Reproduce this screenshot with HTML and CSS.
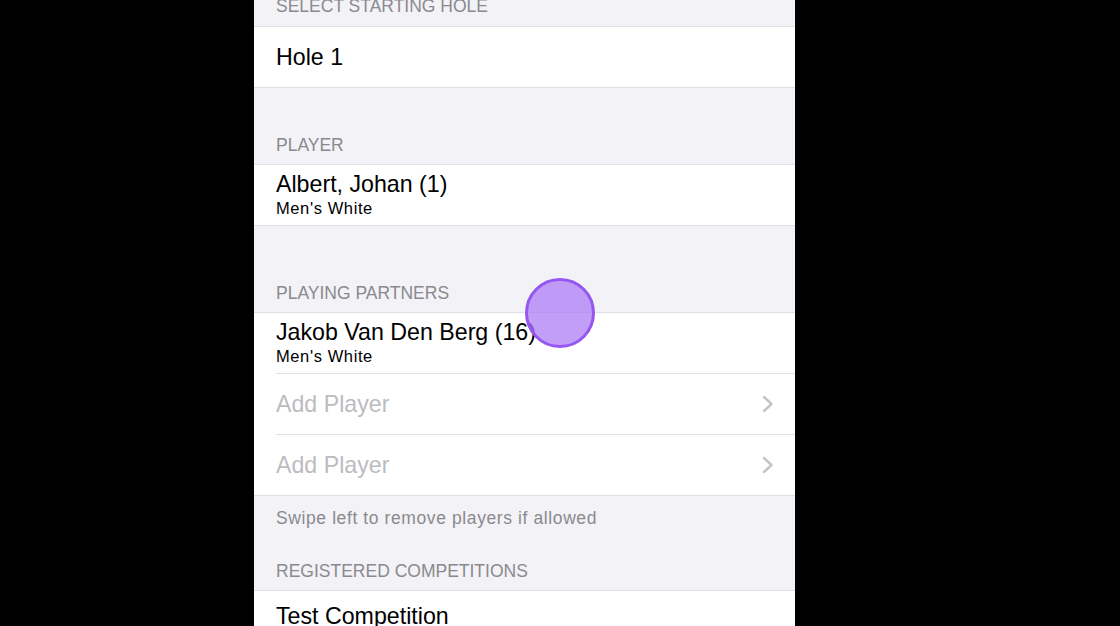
FILE: index.html
```html
<!DOCTYPE html>
<html lang="en">

<head>
    <meta charset="UTF-8">
    <meta name="viewport" content="width=device-width, initial-scale=1.0">
    <title>Round Setup</title>
    <link rel="stylesheet" href="styles.css">
</head>

<body>

    <section class="panel">
        <div class="group-header top-header">SELECT STARTING HOLE</div>
        <div class="group">
            <div class="cell">
                <span class="cell-title">Hole 1</span>
            </div>
        </div>

        <div class="group-header player-header">PLAYER</div>
        <div class="group">
            <div class="cell">
                <span class="cell-title">Albert, Johan (1)</span>
                <span class="cell-sub">Men's White</span>
            </div>
        </div>

        <div class="group-header partners-header">PLAYING PARTNERS</div>
        <div class="group">
            <div class="cell">
                <span class="cell-title">Jakob Van Den Berg (16)</span>
                <span class="cell-sub">Men's White</span>
            </div>
            <div class="cell cell-link">
                <span class="cell-title placeholder">Add Player</span>
                <svg class="chevron" width="12" height="18" viewBox="0 0 12 18">
                    <path d="M2 2 L9.5 9 L2 16" fill="none" stroke="#c4c4c8" stroke-width="2.4" stroke-linecap="round" stroke-linejoin="round" />
                </svg>
            </div>
            <div class="cell cell-link">
                <span class="cell-title placeholder">Add Player</span>
                <svg class="chevron" width="12" height="18" viewBox="0 0 12 18">
                    <path d="M2 2 L9.5 9 L2 16" fill="none" stroke="#c4c4c8" stroke-width="2.4" stroke-linecap="round" stroke-linejoin="round" />
                </svg>
            </div>
        </div>
        <div class="group-footer">Swipe left to remove players if allowed</div>

        <div class="group-header comp-header">REGISTERED COMPETITIONS</div>
        <div class="group">
            <div class="cell cell-top">
                <span class="cell-title">Test Competition</span>
            </div>
        </div>

        <div class="touch"></div>
    </section>

</body>

</html>
```

FILE: styles.css
```css
html,
body {
    margin: 0;
    height: 100%;
    background-color: #000;
    overflow: hidden;
}

body {
    font-family: "Liberation Sans", Arial, sans-serif;
}

.panel {
    position: relative;
    width: 541px;
    height: 100%;
    margin-left: 254px;
    background-color: #f2f2f7;
    overflow: hidden;
}

.group-header {
    display: flex;
    align-items: flex-end;
    box-sizing: border-box;
    padding: 0 22px 9px 22px;
    font-size: 17.5px;
    line-height: 20px;
    color: #8a8a8e;
}

.top-header {
    height: 26px;
    padding-bottom: 10px;
}

.player-header {
    height: 76px;
}

.partners-header {
    height: 86px;
    padding-bottom: 9px;
}

.comp-header {
    height: 62px;
    padding-bottom: 9px;
}

.group {
    background-color: #fff;
    border-top: 1px solid #e0e0e4;
    border-bottom: 1px solid #e0e0e4;
}

.cell {
    display: flex;
    flex-direction: column;
    justify-content: center;
    height: 60px;
    margin-left: 22px;
    padding-right: 22px;
}

.cell + .cell {
    border-top: 1px solid #e0e0e4;
}

.cell-link {
    flex-direction: row;
    align-items: center;
    justify-content: space-between;
}

.cell-top {
    justify-content: flex-start;
    box-sizing: border-box;
    padding-top: 12px;
}

.cell-title {
    font-size: 23.2px;
    line-height: 27px;
    color: #000;
}

.cell-sub {
    font-size: 16.5px;
    line-height: 21px;
    letter-spacing: 0.6px;
    color: #000;
}

.placeholder {
    color: #bcbcc0;
}

.chevron {
    margin-right: -1px;
}

.group-footer {
    padding: 12px 22px 0 22px;
    font-size: 17.5px;
    line-height: 20px;
    letter-spacing: 0.6px;
    color: #8a8a8e;
}

.touch {
    position: absolute;
    left: 271px;
    top: 278px;
    width: 64px;
    height: 64px;
    border: 3px solid #9657f0;
    border-radius: 50%;
    background-color: rgba(170, 120, 246, 0.72);
}
```
